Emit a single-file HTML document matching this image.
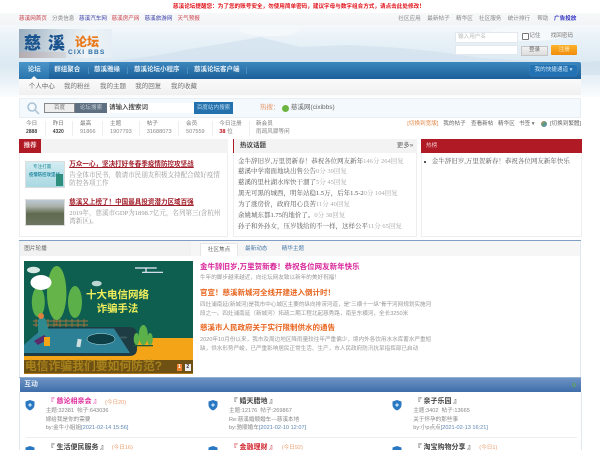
<!DOCTYPE html>
<html lang="zh"><head><meta charset="utf-8"><title>慈溪论坛</title>
<style>
html,body{margin:0;padding:0;background:#fff}
#p{position:relative;width:600px;height:450px;overflow:hidden;background:#fff;font-family:"Liberation Sans","Noto Sans CJK SC",sans-serif;font-size:5.6px;line-height:8px;color:#555;filter:blur(.3px)}
#p div{position:absolute;white-space:nowrap}
.s{font-family:"Liberation Serif","Noto Serif CJK SC",serif}
.n{font-size:6.5px;font-weight:700;color:#e3eef6;top:66.3px}
.u{font-size:6.5px;color:#777;top:83.3px}
.t{font-size:7px;font-weight:700;color:#444;top:398.3px}
.r2{top:443.7px}
.d{color:#e8a070}
.l{color:#888}
.h{font-size:6.5px;color:#555;left:238px}
.h span{color:#aaa}
.x{left:200px;font-size:7.5px;font-weight:700;line-height:10px;color:#e8641e}
.m{left:200px;width:232px;overflow:hidden;color:#999;line-height:8.6px}
.v{top:121px;width:1px;height:15px;background:#eee}
</style></head><body><div id="p">
<!-- header sky -->
<div style="left:0;top:13px;width:600px;height:12px;background:linear-gradient(#f7f8f9,#f1f4f6)"></div>
<div style="left:0;top:25px;width:600px;height:72px;background:linear-gradient(#f4f8fb 0,#e6f0f7 25%,#dce9f2 55%,#eaf2f7 78%,#fbfdfe 100%)"></div>
<svg style="position:absolute;left:0;top:25px" width="600" height="50"><path d="M100 38 L160 30 L190 24 L215 20 L260 12 L300 22 L350 20 L400 23 L440 27 L480 33 L565 38 L600 36 V50 H100Z" fill="#cfe0ec" opacity=".6"/><ellipse cx="270" cy="5" rx="30" ry="6" fill="#f4f8fb"/><ellipse cx="530" cy="8" rx="40" ry="8" fill="#f5f9fb"/></svg>
<div style="left:173px;top:2.5px;font-weight:700;color:#e0141c">慈溪论坛提醒您：为了您的账号安全，勿使用简单密码，建议字母与数字组合方式，请点击此处修改！</div>
<div style="left:19px;top:14.7px;color:#c8404a">慈溪网首页</div>
<div style="left:52px;top:14.7px;color:#888">分类信息</div>
<div style="left:79px;top:14.7px;color:#3a3fa8">慈溪汽车网</div>
<div style="left:111.5px;top:14.7px;color:#d0454d">慈溪房产网</div>
<div style="left:144.5px;top:14.7px;color:#3a3fa8">慈溪旅游网</div>
<div style="left:177.5px;top:14.7px;color:#d0454d">天气预报</div>
<div style="left:398.3px;top:14.7px;color:#888">社区应用</div>
<div style="left:427.3px;top:14.7px;color:#888">最新帖子</div>
<div style="left:456px;top:14.7px;color:#888">精华区</div>
<div style="left:479px;top:14.7px;color:#888">社区服务</div>
<div style="left:507.7px;top:14.7px;color:#888">统计排行</div>
<div style="left:537.3px;top:14.7px;color:#888">帮助</div>
<div style="left:554px;top:14.7px;color:#3434c0;font-weight:700">广告投放</div>
<!-- logo -->
<div style="left:19px;top:29px;width:93px;height:29px;background:linear-gradient(100deg,#98acbe 0,#cfdbe3 40%,#eef3f6 72%,#e4eef5 100%)"></div>
<div style="left:19px;top:52px;width:47px;height:6px;background:linear-gradient(90deg,#b9a9ac,#cfd3d8);opacity:.8"></div>
<div style="left:24px;top:34.5px;font-size:17px;font-weight:900;color:#1a548f;letter-spacing:7px;line-height:18px">慈溪</div>
<div style="left:75px;top:35.5px;font-size:12px;font-weight:900;color:#e9791a;line-height:13px">论坛</div>
<div style="left:68px;top:48.5px;font-size:6.6px;font-weight:700;color:#2f6fa6;letter-spacing:1.1px;line-height:8px">CIXI BBS</div>
<!-- login -->
<div style="left:455px;top:32px;width:60.5px;height:9px;background:#fff;border:1px solid #e2e8ed;color:#bbb;line-height:9px;text-indent:2px">输入用户名</div>
<div style="left:455px;top:45px;width:60.5px;height:8px;background:#fff;border:1px solid #e2e8ed"></div>
<div style="left:522.3px;top:33.3px;width:4.5px;height:4.5px;border:1px solid #777;border-radius:1px;background:#fff"></div>
<div style="left:529.3px;top:32px;color:#777">记住</div>
<div style="left:550.7px;top:32px;color:#777">找回密码</div>
<div style="left:521.3px;top:46px;width:24.5px;height:7.5px;background:linear-gradient(#f2f2f2,#ddd);border:1px solid #c5c5c5;color:#666;text-align:center;line-height:7.5px">登录</div>
<div style="left:551.3px;top:45px;width:26px;height:10px;background:linear-gradient(#fdb32c,#f08c0c);color:#ffe9c0;text-align:center;line-height:10px;border-radius:1px">注册</div>
<!-- nav -->
<div style="left:19px;top:62px;width:562px;height:16.5px;background:linear-gradient(#3c87bd,#1c5f99);border-radius:2px 2px 0 0"></div>
<div style="left:19px;top:62px;width:30px;height:16.5px;background:linear-gradient(#4a95c9,#2a74ad)"></div>
<div style="left:31px;top:75.5px;width:0;height:0;border:3px solid transparent;border-top:0;border-bottom-color:#f6f6f6"></div>
<div class="n" style="left:27.7px;color:#dcebf5">论坛</div>
<div class="n" style="left:54.3px">群组聚合</div>
<div class="n" style="left:94px">慈溪雅缘</div>
<div class="n" style="left:134px">慈溪论坛小程序</div>
<div class="n" style="left:194px">慈溪论坛客户端</div>
<div style="left:87.5px;top:67px;width:1px;height:7px;background:#4c8dbd"></div>
<div style="left:127px;top:67px;width:1px;height:7px;background:#4c8dbd"></div>
<div style="left:186.5px;top:67px;width:1px;height:7px;background:#4c8dbd"></div>
<div style="left:246px;top:67px;width:1px;height:7px;background:#4c8dbd"></div>
<div style="left:530px;top:65px;width:47px;height:10.7px;background:#2272b4;border-radius:2px;color:#cfe4f4;line-height:10.7px;text-indent:4.5px;box-shadow:0 0 1px #5aa0d4">我的快捷通道 ▾</div>
<!-- subnav -->
<div style="left:19px;top:78.5px;width:562px;height:16.5px;background:linear-gradient(#fafafa,#f0f0f0)"></div>
<div class="u" style="left:28.7px;color:#666">个人中心</div>
<div class="u" style="left:64px">我的粉丝</div>
<div class="u" style="left:100px">我的主题</div>
<div class="u" style="left:135.3px">我的回复</div>
<div class="u" style="left:171px">我的收藏</div>
<!-- search -->
<div style="left:19px;top:98.3px;width:562px;height:19.5px;background:#f4f9fd;border:1px solid #e8eef2;box-sizing:border-box"></div>
<svg style="position:absolute;left:26px;top:101px" width="14" height="14"><circle cx="6" cy="6" r="4" fill="none" stroke="#a9c3d8" stroke-width="1.6"/><path d="M9 9 L13 13" stroke="#b4c8d8" stroke-width="1.8"/></svg>
<div style="left:44px;top:103px;width:31px;height:10px;background:#eee;border:1px solid #888;box-sizing:border-box;text-align:center;line-height:8px;color:#777">百度</div>
<div style="left:75px;top:103px;width:32px;height:10px;background:#5d6e80;color:#c5ced6;text-align:center;line-height:10px">论坛搜索</div>
<div style="left:107px;top:103px;width:87px;height:10px;background:#fff"></div>
<div style="left:109px;top:104px;color:#333;font-size:6.5px;font-weight:500">请输入搜索词</div>
<div style="left:194px;top:102px;width:39px;height:12px;background:#2372ad;color:#bcd8ec;text-align:center;line-height:12px">百度站内搜索</div>
<div style="left:260px;top:104.3px;color:#e89a6a;font-size:6.5px">热搜：</div>
<div style="left:282px;top:105px;width:7px;height:7px;border-radius:50%;background:#6cb33f"></div>
<div style="left:291px;top:104.3px;color:#666;font-size:6.5px">慈溪网(cixibbs)</div>
<!-- stats -->
<div style="left:26px;top:120px;color:#777">今日</div><div style="left:26px;top:128.3px;color:#444;font-weight:700;font-size:5px">2888</div>
<div style="left:52.7px;top:120px;color:#777">昨日</div><div style="left:52.7px;top:128.3px;color:#444;font-weight:700;font-size:5px">4320</div>
<div style="left:80px;top:120px;color:#777">最高</div><div style="left:80px;top:128.3px;color:#888">91866</div>
<div style="left:110px;top:120px;color:#777">主题</div><div style="left:110px;top:128.3px;color:#888">1907793</div>
<div style="left:146.7px;top:120px;color:#777">帖子</div><div style="left:146.7px;top:128.3px;color:#888">31688073</div>
<div style="left:186px;top:120px;color:#777">会员</div><div style="left:186px;top:128.3px;color:#888">507559</div>
<div style="left:219.3px;top:120px;color:#777">今日注册</div><div style="left:219.3px;top:128.3px;color:#777"><b style="color:#c0141c">38</b> 位</div>
<div style="left:256px;top:120px;color:#777">新会员</div><div style="left:256px;top:128.3px;color:#888">雨疏风骤等闲</div>
<div class="v" style="left:45px"></div><div class="v" style="left:72px"></div><div class="v" style="left:102px"></div><div class="v" style="left:139px"></div><div class="v" style="left:178px"></div><div class="v" style="left:212px"></div><div class="v" style="left:249px"></div>
<div style="left:407.3px;top:120.3px;color:#e08a4a">[切换到宽版]</div>
<div style="left:443.3px;top:120.3px;color:#666">我的帖子</div>
<div style="left:471px;top:120.3px;color:#666">查看新帖</div>
<div style="left:498px;top:120.3px;color:#666">精华区</div>
<div style="left:519px;top:120.3px;color:#666">书签 ▾</div>
<div style="left:541px;top:121px;width:6px;height:6px;border-radius:50%;background:linear-gradient(135deg,#d08a6a,#5a9a7a 50%,#6a8ad0)"></div>
<div style="left:550px;top:120.3px;color:#666">[切换到繁體]</div>
<!-- recommend box -->
<div style="left:19px;top:139px;width:209px;height:98px;background:#fff;border:1px solid #eee;box-sizing:border-box"></div>
<div style="left:19px;top:139px;width:209px;height:14px;background:#f3f3f3"></div>
<div style="left:19px;top:139px;width:22.3px;height:14px;background:#b01a25;color:#f5d6d8;text-align:center;line-height:14px;font-size:6.5px;font-weight:700">推荐</div>
<div style="left:25px;top:161px;width:40px;height:26.5px;background:linear-gradient(#d3ecf2,#a8d8e2);border:1px solid #ddd;box-sizing:border-box"></div>
<div style="left:33px;top:163px;color:#2a8f9a;font-size:4.6px">专注打赢</div>
<div style="left:29px;top:171px;color:#1f87a0;font-size:4.4px;font-weight:700">疫情防控攻坚战</div>
<div style="left:56px;top:174px;width:7px;height:12px;background:#2f8f7f"></div>
<div style="left:25px;top:199.3px;width:40px;height:26.4px;background:linear-gradient(#bcc9d3 0,#aab2aa 25%,#5f6a50 55%,#6c7560 100%);border:1px solid #ddd;box-sizing:border-box"></div>
<div style="left:69.3px;top:161px;color:#a01c28;font-size:6.55px;font-weight:700;text-decoration:underline">万众一心，坚决打好冬春季疫情防控攻坚战</div>
<div style="left:69.3px;top:171.5px;color:#999;font-size:6.55px;line-height:8.5px;white-space:normal;width:154px" class="s">告全体市民书，敬请市民朋友积极支持配合做好疫情防控各项工作</div>
<div style="left:69.3px;top:199.3px;color:#a01c28;font-size:6.55px;font-weight:700;text-decoration:underline">慈溪又上榜了！中国最具投资潜力区域百强</div>
<div style="left:69.3px;top:209.5px;color:#999;font-size:6.55px;line-height:8.8px;white-space:normal;width:154px" class="s">2019年，慈溪市GDP为1898.7亿元，名列第三(含杭州湾新区)。</div>
<!-- hot topics -->
<div style="left:233.3px;top:139px;width:184px;height:98px;background:#fff;border:1px solid #eee;box-sizing:border-box"></div>
<div style="left:233.3px;top:139px;width:184px;height:14px;background:#f3f3f3;border-left:1.5px solid #b01a25;box-sizing:border-box"></div>
<div style="left:240px;top:141.7px;color:#444;font-size:6.5px;font-weight:700">热议话题</div>
<div style="left:396.7px;top:141.7px;color:#666;font-size:6.5px">更多»</div>
<div class="h s" style="top:157.7px">金牛辞旧岁,万里贺新春！恭祝各位网友新年<span>146分 264回复</span></div>
<div class="h s" style="top:168.3px">慈溪中学南面地块出售公告<span>0分 39回复</span></div>
<div class="h s" style="top:179.3px">慈溪的里杜湖水库快干涸了<span>5分 45回复</span></div>
<div class="h s" style="top:190.3px">黑无可黑的城西，明年站稳1.5万，后年1.5-2<span>0分 104回复</span></div>
<div class="h s" style="top:201px">为了涨房价，政府用心良苦<span>11分 40回复</span></div>
<div class="h s" style="top:212px">余姚城东都1.75的地价了。<span>0分 38回复</span></div>
<div class="h s" style="top:222.7px">孙子和外孙女，压岁钱给的不一样，这样公平<span>11分 65回复</span></div>
<!-- hot list -->
<div style="left:421px;top:139px;width:160.7px;height:98px;background:#fff;border:1px solid #eee;box-sizing:border-box"></div>
<div style="left:421px;top:139px;width:160.7px;height:14px;background:#b01a25;color:#eec5c8;line-height:14px;text-indent:5px">热榜</div>
<div style="left:424px;top:161px;width:2px;height:2px;background:#555"></div>
<div class="h s" style="left:431.7px;top:157.7px">金牛辞旧岁,万里贺新春！恭祝各位网友新年快乐</div>
<!-- slider section -->
<div style="left:19px;top:240px;width:562px;height:1px;background:#7f9fc4"></div>
<div style="left:19px;top:241px;width:562px;height:137px;background:#fff;border-left:1px solid #dfe7ef;border-right:1px solid #dfe7ef;box-sizing:border-box"></div>
<div style="left:20px;top:241px;width:171px;height:15px;background:#f2f2f2"></div>
<div style="left:24.3px;top:245px;color:#666">图片轮播</div>
<div style="left:191px;top:241px;width:389px;height:15px;background:#f6f6f6"></div>
<div style="left:200px;top:243.3px;width:38px;height:13px;background:#fff;border:1px solid #e6e6e6;border-bottom:0;box-sizing:border-box;text-align:center;line-height:12px;color:#666">社区焦点</div>
<div style="left:245px;top:245.3px;color:#4a7aa8">最新动态</div>
<div style="left:281.7px;top:245.3px;color:#4a7aa8">精华主题</div>
<!-- slider image -->
<div style="left:24px;top:261px;width:169px;height:113px;overflow:hidden;background:#0e5f50">
<svg width="169" height="113" style="position:absolute;left:0;top:0">
<path d="M0 92 H110 L113 77 H169 V113 H0Z" fill="#f4a417"/>
<ellipse cx="9.5" cy="9" rx="6.5" ry="3.2" fill="#d8e8e4"/>
<rect x="31.5" y="50" width="2" height="15" fill="#7a5a30"/>
<ellipse cx="32.7" cy="32" rx="9.7" ry="27" fill="#65b44a"/>
<ellipse cx="14.3" cy="41" rx="6.5" ry="15" fill="#5bb04a"/>
<ellipse cx="51" cy="41" rx="7" ry="16" fill="#5bb04a"/>
<path d="M9 60 H64 M9 64 H64" stroke="#a5743f" stroke-width="1"/>
<path d="M12 58 V66 M18 58 V66 M24 58 V66 M30 58 V66 M36 58 V66 M42 58 V66 M48 58 V66 M54 58 V66 M60 58 V66" stroke="#a5743f" stroke-width=".9"/>
<path d="M0 87 L17 66 H105 Q113 66 113 74 V88 Q113 95 105 95 H0Z" fill="#1e3c44"/>
<path d="M0 84 L18 67.5 H90 L106 92 L30 92 L0 92Z" fill="#2d8196"/>
<ellipse cx="77" cy="78" rx="14" ry="5.5" fill="#0c3f46" stroke="#bfe2e8" stroke-width=".5"/>
<ellipse cx="55" cy="0" rx="0" ry="0"/>
<rect x="53" y="78" width="4" height="8" fill="#cfe0e0" transform="rotate(10 55 82)"/>
<rect x="96" y="75.5" width="7" height="2" rx="1" fill="#3a5a60"/>
<ellipse cx="17" cy="21.5" rx="10.5" ry="7.5" fill="#fff"/>
<path d="M14 59 q4 -6 8 0 l4 16 h-12z" fill="#2e8a8f"/>
<circle cx="17" cy="55" r="3" fill="#e08040"/>
<path d="M10 80 L20 74 L24 78 L14 84Z" fill="#5a2a6a"/>
<rect x="20" y="76" width="6" height="9" fill="#f4a417"/>
<rect x="109" y="84" width="20" height="1.3" fill="#1a5a3a"/>
<ellipse cx="119.3" cy="74" rx="4.5" ry="10" fill="#5bb04a"/>
<ellipse cx="112.5" cy="78" rx="2.8" ry="6" fill="#5bb04a"/>
<ellipse cx="126" cy="78" rx="2.8" ry="6" fill="#5bb04a"/>
<ellipse cx="72.7" cy="22.5" rx="5" ry="2.8" fill="#bcd6d2"/>
<path d="M111 7 H132.7 M122 7.5 V11 M118 11.3 H139" stroke="#eef" stroke-width="1.2"/>
<rect x="0" y="99" width="169" height="13.5" fill="#3b3212" opacity=".72"/>
</svg>
<div style="left:62px;top:27.5px;color:#f0ee5a;font-size:10.5px;font-weight:700;line-height:13px">十大电信网络</div>
<div style="left:72.7px;top:41.5px;color:#f0ee5a;font-size:10.4px;font-weight:700;line-height:13px">诈骗手法</div>
<div style="left:1px;top:98px;color:#a8821c;font-size:11.8px;font-weight:700;line-height:14px">电信诈骗我们要如何防范?</div>
<div style="left:152.7px;top:103px;width:5.5px;height:7px;background:#f0802a;color:#fff;text-align:center;line-height:7px;font-size:5px;font-weight:700">1</div>
<div style="left:161px;top:103px;width:5.5px;height:7px;background:#eee;color:#333;text-align:center;line-height:7px;font-size:5px;font-weight:700">2</div>
</div>
<!-- news -->
<div class="x" style="top:261.7px;color:#d8269a">金牛辞旧岁,万里贺新春！恭祝各位网友新年快乐</div>
<div class="m" style="top:274.3px">牛年的脚步越来越近，向论坛网友致以新年的美好祝福！</div>
<div class="x" style="top:288.3px">官宣！慈溪新城河全线开建进入倒计时！</div>
<div class="m" style="top:301.4px">四灶浦南延(新城河)是我市中心城区主要的纵向排涝河道，是“三横十一纵”骨干河网规划实施河<br>段之一。四灶浦南延（新城河）拓疏二期工程北起慈秀路，南至东横河，全长3250米</div>
<div class="x" style="top:323.3px">慈溪市人民政府关于实行限制供水的通告</div>
<div class="m" style="top:336.4px">2020年10月份以来，我市及周边地区降雨量较往年严重偏少，境内外各饮用水水库蓄水严重短<br>缺，供水形势严峻，已严重影响居民正常生活、生产，市人民政府防汛抗旱指挥部已启动</div>
<!-- forum section -->
<div style="left:19px;top:376.5px;width:562px;height:1.5px;background:#8fb0d0"></div>
<div style="left:20px;top:378px;width:560.7px;height:14px;background:linear-gradient(#6d93c4,#3f6ea9);color:#e6eef6;line-height:14px;text-indent:4.3px;font-size:6.8px;font-weight:700">互动</div>
<div style="left:571.5px;top:382.5px;width:4px;height:4px;border-radius:50%;border:1px solid #5fa068;box-sizing:border-box"></div>
<div style="left:19px;top:392px;width:1px;height:58px;background:#dfe7ef"></div>
<div style="left:581px;top:392px;width:1px;height:58px;background:#dfe7ef"></div>
<div style="left:26px;top:437.3px;width:551px;height:1px;background:#eee"></div>
<svg style="position:absolute;left:25px;top:400px" width="10" height="11"><path d="M5 0 L9.5 1.5 V5 Q9.5 8.5 5 10.5 Q.5 8.5 .5 5 V1.5Z" fill="#2b78c2"/><path d="M5 3 L7 5 L5 7 L3 5Z" fill="#bfe0f4"/></svg>
<svg style="position:absolute;left:208.3px;top:400px" width="10" height="11"><path d="M5 0 L9.5 1.5 V5 Q9.5 8.5 5 10.5 Q.5 8.5 .5 5 V1.5Z" fill="#2b78c2"/><path d="M5 3 L7 5 L5 7 L3 5Z" fill="#bfe0f4"/></svg>
<svg style="position:absolute;left:392.3px;top:400px" width="10" height="11"><path d="M5 0 L9.5 1.5 V5 Q9.5 8.5 5 10.5 Q.5 8.5 .5 5 V1.5Z" fill="#2b78c2"/><path d="M5 3 L7 5 L5 7 L3 5Z" fill="#bfe0f4"/></svg>
<svg style="position:absolute;left:25px;top:445.7px" width="10" height="11"><path d="M5 0 L9.5 1.5 V5 Q9.5 8.5 5 10.5 Q.5 8.5 .5 5 V1.5Z" fill="#2b78c2"/></svg>
<svg style="position:absolute;left:208.3px;top:445.7px" width="10" height="11"><path d="M5 0 L9.5 1.5 V5 Q9.5 8.5 5 10.5 Q.5 8.5 .5 5 V1.5Z" fill="#2b78c2"/></svg>
<svg style="position:absolute;left:392.3px;top:445.7px" width="10" height="11"><path d="M5 0 L9.5 1.5 V5 Q9.5 8.5 5 10.5 Q.5 8.5 .5 5 V1.5Z" fill="#2b78c2"/></svg>

<div class="t" style="left:47.5px;color:#de2a9c">『 慈论相亲会 』</div><div class="d" style="left:105px;top:398.7px">(今日20)</div>
<div class="l" style="left:45.7px;top:407px">主题:32381&nbsp;&nbsp;帖子:643036</div>
<div class="l" style="left:45.7px;top:416px">嫁给我是你的需要</div>
<div class="l" style="left:45.7px;top:424.3px">by:金牛小姐姐<span style="color:#5d86b4">[2021-02-14 15:56]</span></div>

<div class="t" style="left:230.5px">『 婚天腊地 』</div>
<div class="l" style="left:229px;top:407px">主题:12176&nbsp;&nbsp;帖子:269867</div>
<div class="l" style="left:229px;top:416px">Re:慈溪婚顺婚车---慈溪本地</div>
<div class="l" style="left:229px;top:424.3px">by:驰顺婚车<span style="color:#5d86b4">[2021-02-10 12:07]</span></div>

<div class="t" style="left:414.5px">『 亲子乐园 』</div>
<div class="l" style="left:413.3px;top:407px">主题:3402&nbsp;&nbsp;帖子:13665</div>
<div class="l" style="left:413.3px;top:416px">关于怀孕的那些事</div>
<div class="l" style="left:413.3px;top:424.3px">by:小p点点<span style="color:#5d86b4">[2021-02-13 16:21]</span></div>

<div class="t r2" style="left:47.5px">『 生活便民服务 』</div><div class="d" style="left:111.7px;top:444px">(今日16)</div>
<div class="t r2" style="left:230.5px;color:#d0202a">『 金融理财 』</div><div class="d" style="left:281.7px;top:444px">(今日92)</div>
<div class="t r2" style="left:414.5px">『 淘宝购物分享 』</div><div class="d" style="left:479.3px;top:444px">(今日1)</div>
</div></body></html>
